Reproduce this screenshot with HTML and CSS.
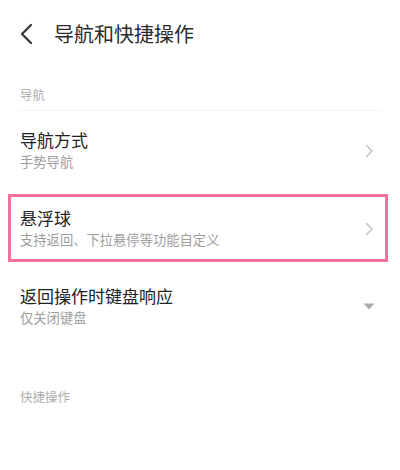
FILE: index.html
```html
<!DOCTYPE html>
<html lang="zh-CN">
<head>
  <meta charset="UTF-8" />
  <meta name="viewport" content="width=device-width, initial-scale=1.0"/>
  <title>导航和快捷操作</title>
  <link rel="stylesheet" href="styles.css">
</head>
<body>
  <header class="header">
    <svg class="back-icon" width="14" height="22" viewBox="0 0 14 22">
      <path d="M12 2 L3 11 L12 20" fill="none" stroke="#333" stroke-width="2.2" stroke-linecap="round" stroke-linejoin="round"/>
    </svg>
    <h1>导航和快捷操作</h1>
  </header>

  <div class="section-label first">导航</div>

  <div class="list">
    <div class="row row-first">
      <div class="row-text">
        <div class="row-title">导航方式</div>
        <div class="row-sub">手势导航</div>
      </div>
      <svg class="chevron" width="9" height="14" viewBox="0 0 9 14">
        <path d="M1.5 1.5 L7 7 L1.5 12.5" fill="none" stroke="#c2c2c2" stroke-width="1.5" stroke-linecap="round" stroke-linejoin="round"/>
      </svg>
    </div>

    <div class="row row-highlight">
      <div class="row-text">
        <div class="row-title">悬浮球</div>
        <div class="row-sub">支持返回、下拉悬停等功能自定义</div>
      </div>
      <svg class="chevron" width="9" height="14" viewBox="0 0 9 14">
        <path d="M1.5 1.5 L7 7 L1.5 12.5" fill="none" stroke="#c2c2c2" stroke-width="1.5" stroke-linecap="round" stroke-linejoin="round"/>
      </svg>
    </div>

    <div class="row row-last">
      <div class="row-text">
        <div class="row-title">返回操作时键盘响应</div>
        <div class="row-sub">仅关闭键盘</div>
      </div>
      <svg class="dropdown" width="12" height="7" viewBox="0 0 12 7">
        <path d="M0.5 0.5 L11.5 0.5 L6 6.5 Z" fill="#aaaaaa"/>
      </svg>
    </div>
  </div>

  <div class="section-label">快捷操作</div>
</body>
</html>
```

FILE: styles.css
```css
/* Base */
body {
  margin: 0;
  width: 400px;
  height: 470px;
  overflow: hidden;
  background: #ffffff;
  font-family: "Noto Sans CJK SC", "Noto Sans", sans-serif;
  color: #222222;
}

/* Header */
.header {
  height: 68px;
  display: flex;
  align-items: center;
  padding: 0 20px 0 19px;
}

.back-icon {
  display: block;
  flex-shrink: 0;
}

.header h1 {
  margin: 0 0 0 21px;
  font-size: 20px;
  font-weight: 400;
  line-height: 28px;
  color: #2b2b2b;
}

/* Section labels */
.section-label {
  padding: 0 20px;
  font-size: 12.5px;
  line-height: 18px;
  color: #acacac;
}

.section-label.first {
  margin-top: 18px;
  padding-bottom: 6px;
}

.section-label.first + .list {
  border-top: 1px solid #f3f3f3;
  margin: 0 20px;
}

/* Rows */
.list {
  display: flex;
  flex-direction: column;
}

.row {
  display: flex;
  align-items: center;
  justify-content: space-between;
}

.row-first {
  padding: 19px 6px 23px 0;
}

.row-highlight {
  margin: 0 -8px 0 -12px;
  border: 3px solid #f2719d;
  padding: 11px 11px 10px 9px;
}

.row-last {
  padding: 24px 5px 0 0;
}

.row-title {
  font-size: 17px;
  line-height: 20px;
  color: #222222;
}

.row-sub {
  margin-top: 3px;
  font-size: 13.3px;
  line-height: 18px;
  color: #9e9e9e;
}

.chevron,
.dropdown {
  display: block;
  flex-shrink: 0;
}

.list + .section-label {
  margin-top: 61px;
}
```
